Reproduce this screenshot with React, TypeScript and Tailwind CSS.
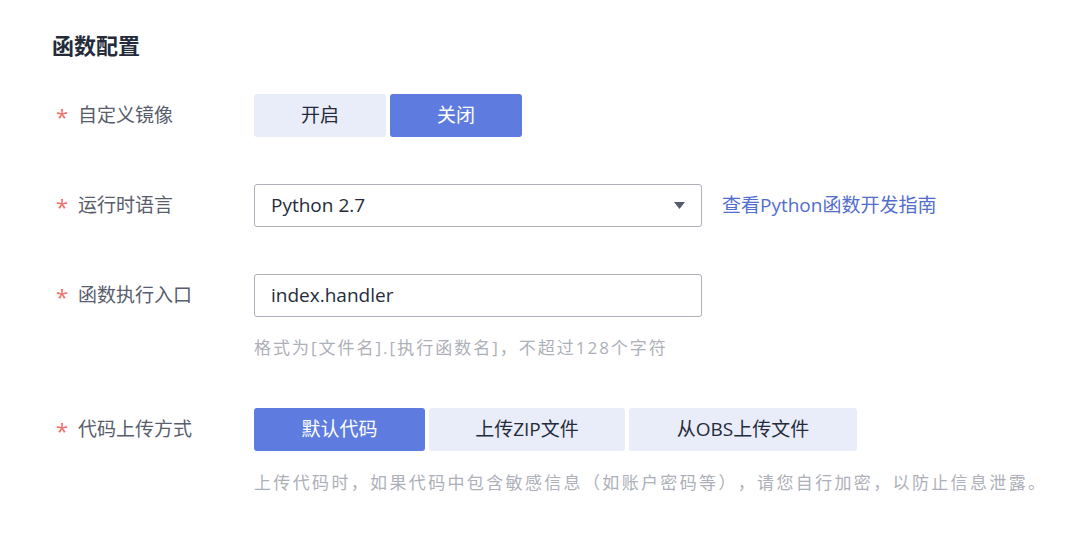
const font = { fontFamily: '"Open Sans", "Noto Sans CJK SC", sans-serif' }

function Label({ text }: { text: string }) {
  return (
    <div className="w-[202px] shrink-0 flex items-center text-[19px] text-[#575d6c]">
      <span className="text-[#f66f6a] w-[26px] pl-[4px] text-[22px] leading-none">*</span>
      <span>{text}</span>
    </div>
  )
}

function Seg({ items, active, widths }: { items: string[]; active: number; widths: string[] }) {
  return (
    <div className="flex gap-[4px]">
      {items.map((it, i) => (
        <div
          key={it}
          className={`h-[43px] flex items-center justify-center rounded-[3px] text-[19px] ${widths[i]} ${
            i === active ? 'bg-[#5e7ce0] text-white' : 'bg-[#e9edfa] text-[#252b3a]'
          }`}
        >
          {it}
        </div>
      ))}
    </div>
  )
}

const hintCls = 'ml-[202px] h-[24px] leading-[24px] text-[17px] text-[#adb0b8] [text-spacing-trim:space-all]'

export default function App() {
  return (
    <div className="w-[1070px] h-[537px] bg-white pt-[31px] pl-[52px]" style={font}>
      <div className="h-[28px] leading-[28px] text-[22px] font-bold text-[#252b3a]">函数配置</div>

      <div className="flex items-center h-[43px] mt-[35px]">
        <Label text="自定义镜像" />
        <Seg items={['开启', '关闭']} active={1} widths={['w-[132px]', 'w-[132px]']} />
      </div>

      <div className="flex items-center h-[43px] mt-[47px]">
        <Label text="运行时语言" />
        <div className="w-[448px] h-[43px] border border-[#adb0b8] rounded-[3px] flex items-center justify-between pl-[16px] pr-[16px] text-[19px] text-[#252b3a]">
          <span>Python 2.7</span>
          <svg width="11" height="7" viewBox="0 0 11 7">
            <path d="M0 0h11L5.5 7z" fill="#575d6c" />
          </svg>
        </div>
        <span className="ml-[20px] text-[19px] text-[#526ecc]">查看Python函数开发指南</span>
      </div>

      <div className="flex items-center h-[43px] mt-[47px]">
        <Label text="函数执行入口" />
        <div className="w-[448px] h-[43px] border border-[#adb0b8] rounded-[3px] flex items-center pl-[16px] text-[19px] text-[#252b3a]">
          index.handler
        </div>
      </div>
      <div className={hintCls + ' mt-[19px] tracking-[2px]'}>格式为[文件名].[执行函数名]，不超过128个字符</div>

      <div className="flex items-center h-[43px] mt-[48px]">
        <Label text="代码上传方式" />
        <Seg
          items={['默认代码', '上传ZIP文件', '从OBS上传文件']}
          active={0}
          widths={['w-[171px]', 'w-[196px]', 'w-[228px]']}
        />
      </div>
      <div className={hintCls + ' mt-[20px] tracking-[2.35px]'}>
        上传代码时，如果代码中包含敏感信息（如账户密码等），请您自行加密，以防止信息泄露。
      </div>
    </div>
  )
}
